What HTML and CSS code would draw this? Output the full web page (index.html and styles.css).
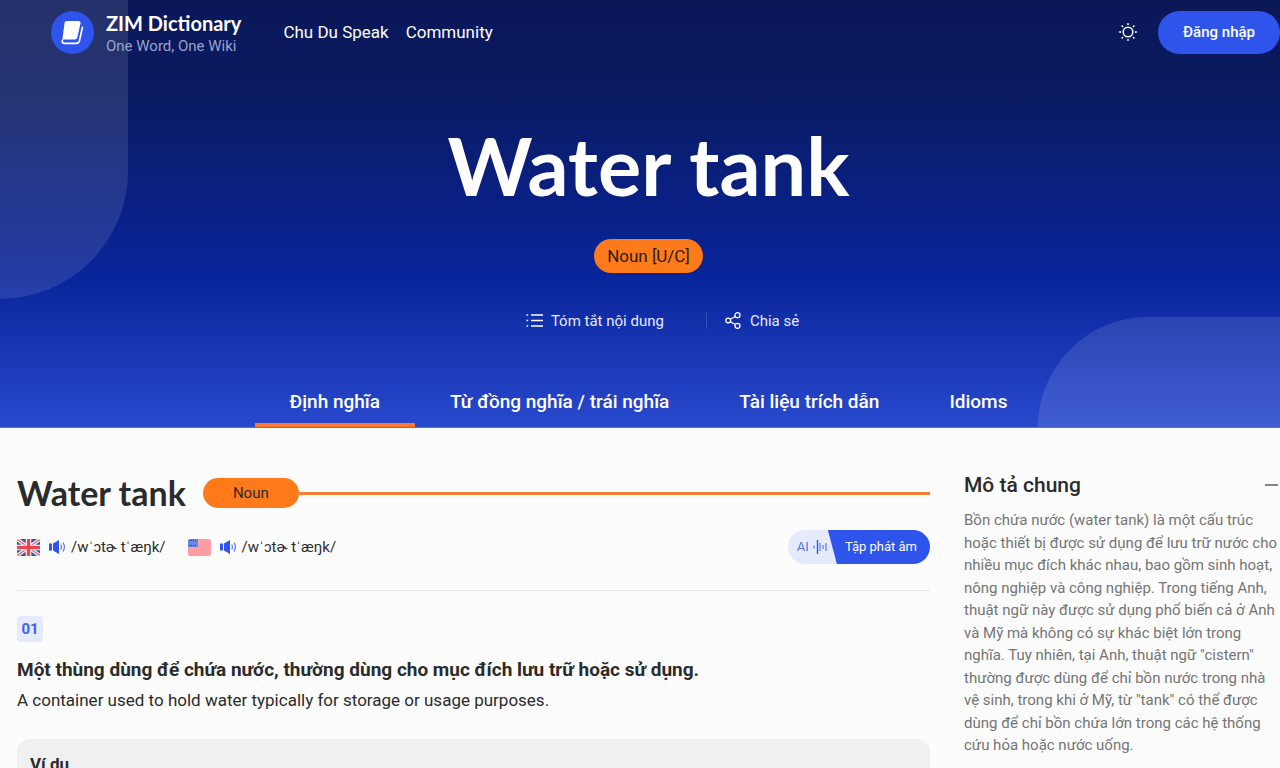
FILE: index.html
```html
<!DOCTYPE html>
<html lang="vi">
<head>
  <meta charset="utf-8">
  <meta name="viewport" content="width=device-width, initial-scale=1">
  <title>Water tank - ZIM Dictionary</title>
  <link rel="stylesheet" href="styles.css">
</head>
<body>
  <div class="hero">
    <div class="shape shape-left"></div>
    <div class="shape shape-right"></div>

    <header class="header">
      <a class="logo" href="#">
        <svg class="logo-icon" viewBox="0 0 43 43" aria-hidden="true">
          <circle cx="21.500" cy="21.500" r="21.500" fill="#2f54eb"/>
          <path d="M16 10h11.500c1.500 0 2.300 1 2 2.400l-3.200 14.100c-.3 1.200-1.200 2-2.500 2H14c-1.300 0-2.300.4-2.800 1.200l2.300-17.500C13.700 10.800 14.500 10 16 10z" fill="#fff"/>
          <path d="M11.300 29.500c-.2 1.900.5 2.800 2.200 2.800h11.700c1.700 0 2.700-.8 3.200-2.400l3-13.500" fill="none" stroke="#fff" stroke-width="1.700" stroke-linecap="round"/>
        </svg>
        <span class="logo-text">
          <span class="logo-name">ZIM Dictionary</span>
          <span class="logo-slogan">One Word, One Wiki</span>
        </span>
      </a>
      <nav class="menu">
        <a href="#">Chu Du Speak</a>
        <a href="#">Community</a>
      </nav>
      <div class="header-right">
        <button class="theme-btn" type="button" aria-label="Giao diện">
          <svg width="18" height="18" viewBox="0 0 18 18" fill="none" stroke="#fff" stroke-linecap="round">
            <circle cx="9" cy="9" r="4.800" stroke-width="1.500"/>
            <path d="M9 1v.2M9 16.800v.2M1 9h.2M16.800 9h.2M3.200 3.200l.2.200M14.600 14.600l.2.200M3.200 14.800l.2-.2M14.600 3.400l.2-.2" stroke-width="1.800"/>
          </svg>
        </button>
        <button class="login-btn" type="button">Đăng nhập</button>
      </div>
    </header>

    <div class="hero-body">
      <h1>Water tank</h1>
      <span class="word-type">Noun [U/C]</span>
      <div class="actions">
        <button class="action summary" type="button">
          <svg width="17" height="17" viewBox="0 0 17 17" stroke="#fff" fill="none" aria-hidden="true">
            <path d="M5 3h12M5 8.500h12M5 14h12" stroke-width="1.300"/>
            <path d="M0.500 3h1.700M0.500 8.500h1.700M0.500 14h1.700" stroke-width="1.700"/>
          </svg>
          Tóm tắt nội dung
        </button>
        <button class="action share" type="button">
          <svg width="17" height="17" viewBox="0 0 17 17" stroke="#fff" stroke-width="1.300" fill="none" aria-hidden="true">
            <circle cx="3.200" cy="8.500" r="2.400"/>
            <circle cx="12.500" cy="3.200" r="2.500"/>
            <circle cx="12.500" cy="13.800" r="2.500"/>
            <path d="M5.400 7.300l4.900-2.800M5.400 9.700l4.900 2.800"/>
          </svg>
          Chia sẻ
        </button>
      </div>
    </div>

    <nav class="tabs">
      <a class="tab active" href="#definition">Định nghĩa</a>
      <a class="tab" href="#synonym">Từ đồng nghĩa / trái nghĩa</a>
      <a class="tab" href="#reference">Tài liệu trích dẫn</a>
      <a class="tab" href="#idioms">Idioms</a>
    </nav>
  </div>

  <div class="container">
    <main class="content" id="definition">
      <div class="word-heading">
        <h2>Water tank</h2>
        <span class="noun">Noun</span>
        <span class="line"></span>
      </div>

      <div class="pronounce">
        <div class="phonetic">
          <svg class="flag" viewBox="0 0 23 17" aria-hidden="true">
            <rect width="23" height="17" rx="2.500" fill="#3a55a5"/>
            <path d="M1 1l21 15M22 1L1 16" stroke="#fff" stroke-width="3.600"/>
            <path d="M1 1l21 15M22 1L1 16" stroke="#f0525e" stroke-width="1.300"/>
            <path d="M11.500 0v17M0 8.500h23" stroke="#fff" stroke-width="5.600"/>
            <path d="M11.500 0v17M0 8.500h23" stroke="#f0434f" stroke-width="3.400"/>
          </svg>
          <button class="sound" type="button" aria-label="Nghe giọng Anh">
            <svg width="17" height="16" viewBox="0 0 17 16" aria-hidden="true">
              <path d="M0 4.500h3v7H0zM4 4.500l6-3.500v14L4 11.500z" fill="#2f54eb"/>
              <path d="M11.800 5.500q1.200 2.500 0 5M14 3.500q2.800 4.500 0 9" fill="none" stroke="#5874ee" stroke-width="1.200"/>
            </svg>
          </button>
          <span>/wˈɔtɚ tˈæŋk/</span>
        </div>
        <div class="phonetic">
          <svg class="flag" viewBox="0 0 23 17" aria-hidden="true">
            <rect width="23" height="17" rx="2.500" fill="#ff9ea2"/>
            <path d="M2.500 0H10v8H0V2.500Q0 0 2.500 0z" fill="#6488e8"/>
            <path d="M1 1.500h8M1 6.500h8" stroke="#263c9b" stroke-width="1" stroke-dasharray="1 1"/>
          </svg>
          <button class="sound" type="button" aria-label="Nghe giọng Mỹ">
            <svg width="17" height="16" viewBox="0 0 17 16" aria-hidden="true">
              <path d="M0 4.500h3v7H0zM4 4.500l6-3.500v14L4 11.500z" fill="#2f54eb"/>
              <path d="M11.800 5.500q1.200 2.500 0 5M14 3.500q2.800 4.500 0 9" fill="none" stroke="#5874ee" stroke-width="1.200"/>
            </svg>
          </button>
          <span>/wˈɔtɚ tˈæŋk/</span>
        </div>
        <button class="practice" type="button">
          <span class="practice-ai">AI
            <svg width="14" height="14" viewBox="0 0 14 14" fill="none" aria-hidden="true">
              <path d="M1 5.500v3M7 3v8M10 5v4M13 3v8" stroke="#7087ee" stroke-width="1.400"/>
              <path d="M4.500 0v14" stroke="#2f54eb" stroke-width="1.400"/>
            </svg>
          </span>
          <span class="practice-text">Tập phát âm</span>
        </button>
      </div>

      <section class="meaning">
        <span class="number">01</span>
        <h3>Một thùng dùng để chứa nước, thường dùng cho mục đích lưu trữ hoặc sử dụng.</h3>
        <p>A container used to hold water typically for storage or usage purposes.</p>
        <div class="example">
          <h4>Ví dụ</h4>
        </div>
      </section>
    </main>

    <aside class="sidebar">
      <div class="sidebar-title">
        <h2>Mô tả chung</h2>
        <button class="collapse" type="button" aria-label="Thu gọn"></button>
      </div>
      <p>Bồn chứa nước (water tank) là một cấu trúc hoặc thiết bị được sử dụng để lưu trữ nước cho nhiều mục đích khác nhau, bao gồm sinh hoạt, nông nghiệp và công nghiệp. Trong tiếng Anh, thuật ngữ này được sử dụng phổ biến cả ở Anh và Mỹ mà không có sự khác biệt lớn trong nghĩa. Tuy nhiên, tại Anh, thuật ngữ "cistern" thường được dùng để chỉ bồn nước trong nhà vệ sinh, trong khi ở Mỹ, từ "tank" có thể được dùng để chỉ bồn chứa lớn trong các hệ thống cứu hỏa hoặc nước uống.</p>
    </aside>
  </div>
</body>
</html>
```
FILE: styles.css
```css
* {
  box-sizing: border-box;
}
body {
  margin: 0;
  background: #fcfcfc;
  color: #2b2b2b;
  font-family: Roboto, "Liberation Sans", sans-serif;
  font-size: 16px;
}
/* no scrollbar on the page */
html {
  scrollbar-width: none;
}
h1, h2, h3, h4, p {
  margin: 0;
}
a {
  color: inherit;
  text-decoration: none;
}
button {
  border: 0;
  padding: 0;
  background: none;
  font-family: inherit;
  color: inherit;
  cursor: pointer;
}
svg {
  display: block;
  flex-shrink: 0;
}

/* hero */
.hero {
  position: relative;
  overflow: hidden;
  color: #fff;
  background: linear-gradient(180deg, #0a1858 0%, #0a1b62 22%, #08249a 64%, #2949cd 100%);
  border-bottom: 1px solid #5a72d8;
}
.shape {
  position: absolute;
  background: rgba(255, 255, 255, 0.11);
}
.shape-left {
  top: 0;
  left: 0;
  width: 128px;
  height: 299px;
  border-bottom-right-radius: 128px;
}
.shape-right {
  right: 0;
  bottom: 0;
  width: 242px;
  height: 110px;
  border-top-left-radius: 110px;
}
.header {
  position: relative;
  display: flex;
  align-items: center;
  height: 64px;
  padding-left: 51px;
}
.logo {
  display: flex;
  align-items: center;
  gap: 12px;
}
.logo-icon {
  width: 43px;
  height: 43px;
}
.logo-text {
  display: flex;
  flex-direction: column;
  padding-top: 4px;
}
.logo-name {
  font-family: Lato, sans-serif;
  font-size: 20px;
  font-weight: 700;
  line-height: 24px;
}
.logo-slogan {
  font-size: 15px;
  line-height: 22px;
  color: #98a2cc;
}
.menu {
  display: flex;
  gap: 17px;
  margin-left: 42px;
  font-size: 17px;
  line-height: 20px;
}
.header-right {
  display: flex;
  align-items: center;
  gap: 21px;
  margin-left: auto;
}
.login-btn {
  height: 43px;
  padding: 0 25px;
  border-radius: 22px;
  background: #2f54eb;
  color: #fff;
  font-size: 15px;
  font-weight: 500;
}
.hero-body {
  position: relative;
  display: flex;
  flex-direction: column;
  align-items: center;
  padding: 53px 0 0 17px;
}
h1 {
  font-family: Lato, sans-serif;
  font-size: 81px;
  line-height: 96px;
  font-weight: 700;
}
.word-type {
  margin-top: 26px;
  padding: 0 13px;
  border-radius: 17px;
  background: #ff7a1a;
  color: #2b1a14;
  font-size: 17px;
  line-height: 34px;
}
.actions {
  display: flex;
  align-items: center;
  margin-top: 39px;
}
.action {
  display: flex;
  align-items: center;
  gap: 8px;
  height: 17px;
  font-size: 15px;
  color: #e6eaff;
}
.summary {
  padding: 0 42px 0 28px;
}
.share {
  padding-left: 18px;
  border-left: 1px solid #3450bd;
}
.tabs {
  position: relative;
  display: flex;
  justify-content: center;
  margin-top: 46px;
  padding-left: 17px;
}
.tab {
  padding: 15px 35px 9px;
  border-bottom: 4px solid transparent;
  font-size: 19px;
  line-height: 24px;
  font-weight: 500;
}
.tab.active {
  border-color: #ff7a2a;
}

/* content */
.container {
  display: flex;
  gap: 34px;
  padding-left: 17px;
}
.content {
  flex: 1;
  min-width: 0;
  padding-top: 43px;
}
.word-heading {
  display: flex;
  align-items: center;
}
.word-heading h2 {
  margin-right: 17px;
  font-family: Lato, sans-serif;
  font-size: 34px;
  line-height: 44px;
  font-weight: 700;
}
.noun {
  width: 96px;
  border-radius: 15px;
  background: #ff7a1a;
  font-size: 15px;
  line-height: 30px;
  text-align: center;
}
.line {
  flex: 1;
  height: 3px;
  background: #f97e38;
}
.pronounce {
  display: flex;
  align-items: center;
  gap: 22px;
  padding: 15px 0 26px;
  border-bottom: 1px solid #e8e8e8;
}
.phonetic {
  display: flex;
  align-items: center;
  font-size: 15px;
}
.flag {
  width: 23px;
  height: 17px;
}
.sound {
  margin: 0 5px 0 9px;
}
.practice {
  display: flex;
  margin-left: auto;
  height: 34px;
  border-radius: 17px;
  overflow: hidden;
  background: #e6eafd;
  font-size: 13px;
  line-height: 34px;
}
.practice-ai {
  display: flex;
  align-items: center;
  gap: 4px;
  padding-left: 9px;
  color: #5672ed;
}
.practice-text {
  margin-left: 1px;
  padding: 0 13px 0 17px;
  background: #2f54eb;
  clip-path: polygon(0 0, 100% 0, 100% 100%, 9px 100%);
  color: #fff;
}
.meaning {
  padding-top: 25px;
}
.number {
  display: block;
  width: 26px;
  border-radius: 4px;
  background: #e6eafd;
  color: #3c5fec;
  font-size: 15px;
  font-weight: 700;
  line-height: 26px;
  text-align: center;
}
.meaning h3 {
  margin-top: 14px;
  font-size: 19px;
  line-height: 28px;
}
.meaning p {
  margin-top: 3px;
  font-size: 17px;
  line-height: 26px;
}
.example {
  margin-top: 26px;
  padding: 12px 13px;
  border-radius: 13px;
  background: #f0f0f0;
}
.example h4 {
  font-size: 17px;
  line-height: 26px;
}

/* sidebar */
.sidebar {
  width: 316px;
  padding-top: 43px;
}
.sidebar-title {
  display: flex;
  align-items: center;
  justify-content: space-between;
  padding-right: 2px;
}
.sidebar-title h2 {
  font-size: 21px;
  line-height: 28px;
  font-weight: 500;
}
.collapse {
  width: 13px;
  height: 2px;
  background: #858585;
}
.sidebar p {
  margin-top: 10px;
  font-size: 15px;
  line-height: 1.5;
  color: #747474;
}
```
